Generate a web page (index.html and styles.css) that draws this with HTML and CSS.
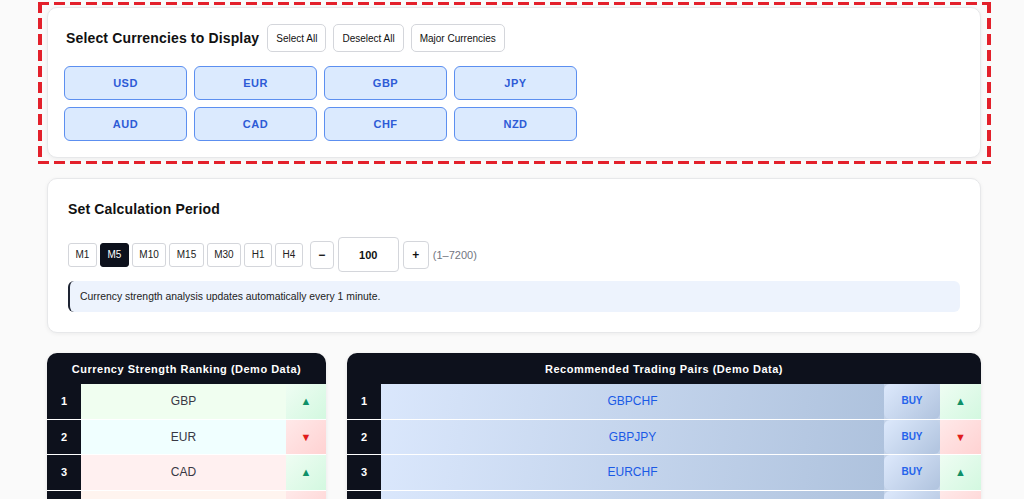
FILE: index.html
```html
<!DOCTYPE html>
<html lang="en">
<head>
    <meta charset="UTF-8">
    <meta name="viewport" content="width=device-width, initial-scale=1.0">
    <title>Currency Strength Meter</title>
    <link rel="stylesheet" href="styles.css">
</head>
<body>
<div class="page">

    <!-- currency selection -->
    <div class="focus-frame">
        <section class="card card-currencies">
            <div class="card-head">
                <h2>Select Currencies to Display</h2>
                <button class="btn-small">Select All</button>
                <button class="btn-small">Deselect All</button>
                <button class="btn-small">Major Currencies</button>
            </div>
            <div class="currency-grid">
                <button class="currency-btn">USD</button>
                <button class="currency-btn">EUR</button>
                <button class="currency-btn">GBP</button>
                <button class="currency-btn">JPY</button>
                <button class="currency-btn">AUD</button>
                <button class="currency-btn">CAD</button>
                <button class="currency-btn">CHF</button>
                <button class="currency-btn">NZD</button>
            </div>
        </section>
    </div>

    <!-- calculation period -->
    <section class="card card-period">
        <h2>Set Calculation Period</h2>
        <div class="period-row">
            <button class="tf-btn">M1</button>
            <button class="tf-btn active">M5</button>
            <button class="tf-btn">M10</button>
            <button class="tf-btn">M15</button>
            <button class="tf-btn">M30</button>
            <button class="tf-btn">H1</button>
            <button class="tf-btn">H4</button>
            <div class="count-control">
                <button class="step-btn">&minus;</button>
                <input class="count-input" type="text" value="100">
                <button class="step-btn plus">+</button>
                <span class="range-hint">(1–7200)</span>
            </div>
        </div>
        <div class="info-note">Currency strength analysis updates automatically every 1 minute.</div>
    </section>

    <!-- results -->
    <div class="tables">
        <div class="table-box">
            <table class="rank-table">
                <colgroup>
                    <col style="width: 34px">
                    <col>
                    <col style="width: 40px">
                </colgroup>
                <thead>
                    <tr><th colspan="3">Currency Strength Ranking (Demo Data)</th></tr>
                </thead>
                <tbody>
                    <tr><td class="rank">1</td><td class="name s1">GBP</td><td class="trend up">▲</td></tr>
                    <tr><td class="rank">2</td><td class="name s2">EUR</td><td class="trend down">▼</td></tr>
                    <tr><td class="rank">3</td><td class="name s3">CAD</td><td class="trend up">▲</td></tr>
                    <tr><td class="rank">4</td><td class="name s4">USD</td><td class="trend down">▼</td></tr>
                    <tr><td class="rank">5</td><td class="name s4">AUD</td><td class="trend up">▲</td></tr>
                    <tr><td class="rank">6</td><td class="name s4">NZD</td><td class="trend down">▼</td></tr>
                </tbody>
            </table>
        </div>

        <div class="table-box">
            <table class="pair-table">
                <colgroup>
                    <col style="width: 34px">
                    <col>
                    <col style="width: 56px">
                    <col style="width: 41px">
                </colgroup>
                <thead>
                    <tr><th colspan="4">Recommended Trading Pairs (Demo Data)</th></tr>
                </thead>
                <tbody>
                    <tr><td class="rank">1</td><td class="pair">GBPCHF</td><td class="action"><span class="buy-btn">BUY</span></td><td class="trend up">▲</td></tr>
                    <tr><td class="rank">2</td><td class="pair">GBPJPY</td><td class="action"><span class="buy-btn">BUY</span></td><td class="trend down">▼</td></tr>
                    <tr><td class="rank">3</td><td class="pair">EURCHF</td><td class="action"><span class="buy-btn">BUY</span></td><td class="trend up">▲</td></tr>
                    <tr><td class="rank">4</td><td class="pair">EURJPY</td><td class="action"><span class="buy-btn">BUY</span></td><td class="trend down">▼</td></tr>
                    <tr><td class="rank">5</td><td class="pair">CADJPY</td><td class="action"><span class="buy-btn">BUY</span></td><td class="trend up">▲</td></tr>
                    <tr><td class="rank">6</td><td class="pair">GBPNZD</td><td class="action"><span class="buy-btn">BUY</span></td><td class="trend down">▼</td></tr>
                </tbody>
            </table>
        </div>
    </div>

</div>
</body>
</html>
```

FILE: styles.css
```css
/* base */
body {
    margin: 0;
    font-family: "Liberation Sans", Arial, sans-serif;
    color: #111;
    background: #fafafa;
}

.page {
    width: 934px;
    margin-left: 47px;
    padding-top: 2px;
    padding-bottom: 30px;
}

button {
    font-family: inherit;
    cursor: pointer;
}

h2 {
    margin: 0;
    font-size: 14px;
    font-weight: bold;
    letter-spacing: 0.15px;
    color: #111;
}

/* cards */
.card {
    background: #fff;
    border: 1px solid #e7e8ea;
    border-radius: 10px;
    box-shadow: 0 1px 4px rgba(0, 0, 0, 0.06);
}

/* red dashed highlight round the first card */
.focus-frame {
    margin: 0 -10px 0 -9px;
    padding: 5px 10px 6px 9px;
    background:
        repeating-linear-gradient(90deg, #e3202b 0 11px, transparent 11px 16px) top / 100% 3px no-repeat,
        repeating-linear-gradient(90deg, #e3202b 0 11px, transparent 11px 16px) bottom / 100% 3px no-repeat,
        repeating-linear-gradient(180deg, #e3202b 0 11px, transparent 11px 16px) left / 4px 100% no-repeat,
        repeating-linear-gradient(180deg, #e3202b 0 11px, transparent 11px 16px) right / 4px 100% no-repeat;
}

.card-currencies {
    padding: 16px;
}

.card-head {
    display: flex;
    align-items: center;
    gap: 7px;
    height: 28px;
    margin-bottom: 14px;
}

.card-head h2 {
    margin-left: 2px;
    margin-right: 1px;
}

.btn-small {
    height: 28px;
    padding: 0 8px;
    background: #fff;
    border: 1px solid #d4d6db;
    border-radius: 5px;
    font-size: 10px;
    color: #111;
}

.currency-grid {
    display: grid;
    grid-template-columns: repeat(4, 123px);
    gap: 7px;
}

.currency-btn {
    height: 34px;
    background: #dbeafe;
    border: 1px solid #5c8ff0;
    border-radius: 6px;
    color: #2d5bd6;
    font-size: 11px;
    font-weight: bold;
    letter-spacing: 0.5px;
}

/* period */
.card-period {
    margin-top: 14px;
    padding: 20px;
}

.card-period h2 {
    line-height: 20px;
    margin-bottom: 18px;
}

.period-row {
    display: flex;
    align-items: center;
    gap: 3px;
    height: 35px;
    margin-bottom: 9px;
}

.tf-btn {
    height: 24px;
    padding: 0 6.5px;
    background: #fff;
    border: 1px solid #d4d6db;
    border-radius: 3px;
    font-size: 10px;
    color: #222;
}

.tf-btn.active {
    background: #0d111c;
    border-color: #0d111c;
    color: #fff;
}

.count-control {
    display: flex;
    align-items: center;
    gap: 4px;
    margin-left: 4px;
}

.step-btn {
    width: 24px;
    height: 28px;
    padding: 0;
    background: #fff;
    border: 1px solid #d4d6db;
    border-radius: 4px;
    font-size: 12px;
    font-weight: bold;
    color: #111;
}

.step-btn.plus {
    width: 26px;
}

.count-input {
    box-sizing: border-box;
    width: 61px;
    height: 35px;
    border: 1px solid #d4d6db;
    border-radius: 4px;
    text-align: center;
    font-family: inherit;
    font-size: 11px;
    font-weight: bold;
    color: #111;
}

.range-hint {
    font-size: 11px;
    color: #72767f;
}

.info-note {
    padding: 9px 10px;
    background: #edf3fd;
    border-left: 2px solid #1e2433;
    border-radius: 6px;
    font-size: 10.4px;
    line-height: 13px;
    color: #222;
}

/* tables */
.tables {
    display: grid;
    grid-template-columns: 279px 634px;
    gap: 21px;
    margin-top: 20px;
}

.table-box {
    border-radius: 10px 10px 0 0;
    overflow: hidden;
    background: #fff;
    box-shadow: 0 1px 4px rgba(0, 0, 0, 0.08);
}

.table-box table {
    width: 100%;
    table-layout: fixed;
    border-collapse: separate;
    border-spacing: 0;
}

.table-box th {
    height: 31px;
    padding: 0;
    background: #0d111c;
    color: #fff;
    font-size: 11px;
    font-weight: bold;
    letter-spacing: 0.5px;
}

.table-box td {
    height: 34.5px;
    padding: 0;
    border-bottom: 1px solid #fff;
    text-align: center;
}

td.rank {
    background: #0d111c;
    color: #fff;
    font-size: 11px;
    font-weight: bold;
}

td.name {
    font-size: 12px;
    color: #383844;
}

.name.s1 { background: #f0fef0; }
.name.s2 { background: #f0ffff; }
.name.s3 { background: #fff0f0; }
.name.s4 { background: #fff4ef; }

td.trend {
    font-size: 11px;
}

.trend.up {
    background: linear-gradient(135deg, #effdf3, #d3f8e0);
    color: #109068;
}

.trend.down {
    background: linear-gradient(135deg, #ffe9e9, #ffd2d2);
    color: #e11d1d;
}

td.pair {
    background: linear-gradient(100deg, #dae7fc, #aec2dd);
    color: #1a5ae6;
    font-size: 12px;
}

td.action {
    background: #c4d3e9;
}

.buy-btn {
    display: block;
    line-height: 34.5px;
    background: linear-gradient(135deg, #dde9fc, #b0c3de);
    border-radius: 6px;
    color: #2463eb;
    font-size: 10px;
    font-weight: bold;
}
```
